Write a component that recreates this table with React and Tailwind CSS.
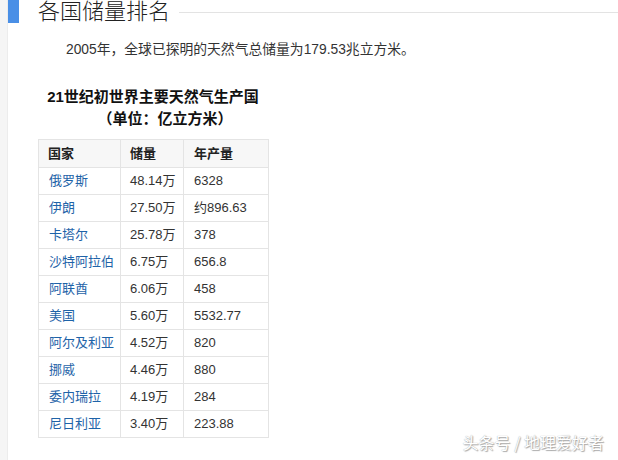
export default function App() {
  const rows = [
    ["俄罗斯", "48.14万", "6328"],
    ["伊朗", "27.50万", "约896.63"],
    ["卡塔尔", "25.78万", "378"],
    ["沙特阿拉伯", "6.75万", "656.8"],
    ["阿联酋", "6.06万", "458"],
    ["美国", "5.60万", "5532.77"],
    ["阿尔及利亚", "4.52万", "820"],
    ["挪威", "4.46万", "880"],
    ["委内瑞拉", "4.19万", "284"],
    ["尼日利亚", "3.40万", "223.88"],
  ];
  const font = { fontFamily: '"Liberation Sans", Arial, "Noto Sans CJK SC", sans-serif' };
  return (
    <div className="relative flex w-[618px] h-[460px] overflow-hidden bg-white text-[#333]" style={font}>
      <div className="w-[8px] h-full bg-[#f5f5f5] border-r border-[#ececec] shrink-0" />
      <div className="flex-1 flex flex-col">
        <div className="flex items-center h-[23px]">
          <div className="w-[11px] h-[23px] bg-[#4a8fe6] shrink-0" />
          <div className="ml-[19px] text-[22px] leading-[23px] font-light text-[#222] whitespace-nowrap">各国储量排名</div>
          <div className="flex-1 h-px bg-[#e3e3e3] ml-[9px] mt-[1px]" />
        </div>
        <p className="mt-[17px] ml-[58px] text-[13.8px] leading-[20px] text-[#333] whitespace-nowrap">
          2005年，全球已探明的天然气总储量为179.53兆立方米。
        </p>
        <div className="mt-[26px] ml-[30px] w-[230px] font-bold text-[15px] leading-[22px] text-[#111] text-center">
          <div>21世纪初世界主要天然气生产国</div>
          <div className="pl-[24px]">（单位：亿立方米）</div>
        </div>
        <div className="mt-[9px] ml-[30px] w-[231px] border-t border-l border-[#e4e4e4] text-[13px]">
          <div className="flex h-[28px] border-b border-[#e4e4e4] bg-[#f7f7f7] font-bold text-[#222]">
            <div className="w-[82px] border-r border-[#e4e4e4] pl-[9px] flex items-center">国家</div>
            <div className="w-[63px] border-r border-[#e4e4e4] pl-[9px] flex items-center">储量</div>
            <div className="w-[85px] border-r border-[#e4e4e4] pl-[10px] flex items-center">年产量</div>
          </div>
          {rows.map((r) => (
            <div key={r[0]} className="flex h-[27px] border-b border-[#e4e4e4]">
              <div className="w-[82px] border-r border-[#e4e4e4] pl-[10px] flex items-center text-[#1e63a8] whitespace-nowrap">{r[0]}</div>
              <div className="w-[63px] border-r border-[#e4e4e4] pl-[9px] flex items-center text-[#333] whitespace-nowrap">{r[1]}</div>
              <div className="w-[85px] border-r border-[#e4e4e4] pl-[10px] flex items-center text-[#333] whitespace-nowrap">{r[2]}</div>
            </div>
          ))}
        </div>
      </div>
      <div
        className="absolute right-[14px] bottom-[8px] text-[16px] leading-[20px] text-white whitespace-nowrap"
        style={{ textShadow: "0 0 1px #999, 1px 1px 1px #aaa", fontFamily: '"Noto Sans CJK SC", sans-serif' }}
      >
        头条号 / 地理爱好者
      </div>
    </div>
  );
}
